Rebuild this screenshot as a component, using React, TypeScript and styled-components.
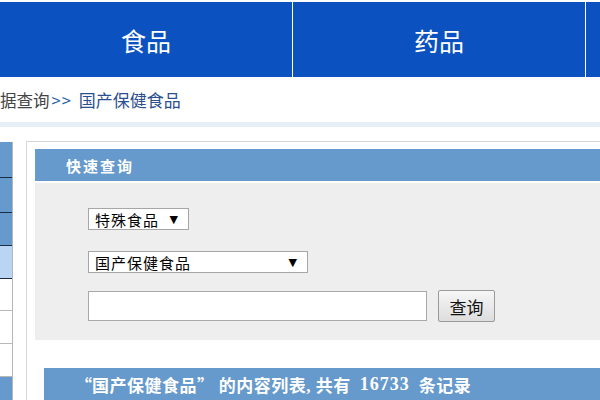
import React from "react";
import styled, { createGlobalStyle } from "styled-components";

const Global = createGlobalStyle`
  html, body { margin: 0; padding: 0; background: #fff; }
  body { width: 600px; height: 400px; overflow: hidden; font-family: "Noto Sans CJK SC", "Liberation Sans", sans-serif; }
`;

const Page = styled.div`
  width: 600px;
  height: 400px;
  overflow: hidden;
  padding-top: 2px;
  box-sizing: border-box;
`;

const Nav = styled.nav`
  display: flex;
  height: 75px;
  background: #0b52c0;
  gap: 1px;
`;

const NavItem = styled.div`
  flex: 0 0 292px;
  display: flex;
  align-items: center;
  justify-content: center;
  background: #0b52c0;
  color: #fff;
  font-size: 25px;
  box-shadow: 1px 0 0 #ffffff;
`;

const Crumb = styled.div`
  height: 45px;
  display: flex;
  align-items: center;
  font-size: 16.5px;
  color: #444;
  white-space: nowrap;
`;

const CrumbArrow = styled.span`
  color: #2a62a8;
  margin: 0 7px 0 2px;
  letter-spacing: 1px;
`;

const CrumbCurrent = styled.span`
  color: #2b4f8f;
  font-size: 17px;
`;

const Strip = styled.div`
  height: 5px;
  background: #e7eff7;
  margin-bottom: 14px;
`;

const Body = styled.div`
  display: flex;
  gap: 13px;
`;

const Sidebar = styled.div`
  flex: 0 0 12px;
  display: flex;
  flex-direction: column;
  border-right: 1px solid #b5b5b5;
  margin-top: 1px;
`;

const SideRow = styled.div<{ $tone: "blue" | "light" | "white"; $h: number }>`
  height: ${(p) => p.$h}px;
  background: ${(p) => (p.$tone === "blue" ? "#6699cc" : p.$tone === "light" ? "#b9d5f3" : "#ffffff")};
  border-bottom: 1px solid ${(p) => (p.$tone === "white" ? "#b8b8b8" : "#1c2c44")};
`;

const Main = styled.div`
  flex: 1;
  border-top: 1px solid #d6d6d6;
  border-left: 1px solid #d6d6d6;
  padding: 7px 0 0 8px;
`;

const BarTitle = styled.div`
  height: 32px;
  background: #6699cc;
  color: #fff;
  font-weight: bold;
  font-size: 15px;
  letter-spacing: 2px;
  display: flex;
  align-items: center;
  padding-left: 31px;
`;

const SearchArea = styled.div`
  margin-top: 2px;
  height: 157px;
  background: #eeeeee;
  padding: 25px 0 0 53px;
  box-sizing: border-box;
  display: flex;
  flex-direction: column;
  align-items: flex-start;
`;

const SelectBox = styled.div<{ $w: number }>`
  width: ${(p) => p.$w}px;
  height: 22px;
  box-sizing: border-box;
  border: 1px solid #a6a6a6;
  background: #fff;
  display: flex;
  align-items: center;
  justify-content: space-between;
  padding: 0 9px 0 6px;
  font-size: 15px;
  color: #000;
  letter-spacing: 1px;
`;

const Arrow = styled.span`
  font-size: 11px;
  font-family: "DejaVu Sans", sans-serif;
`;

const Spacer = styled.div<{ $h: number }>`
  height: ${(p) => p.$h}px;
`;

const InputRow = styled.div`
  display: flex;
  align-items: center;
  gap: 11px;
`;

const TextInput = styled.input`
  width: 339px;
  height: 30px;
  box-sizing: border-box;
  border: 1px solid #a9a9a9;
  background: #fff;
  outline: none;
  margin: 0;
`;

const Button = styled.button`
  width: 57px;
  height: 32px;
  box-sizing: border-box;
  border: 1px solid #9a9a9a;
  border-radius: 2px;
  background: linear-gradient(#f6f6f6, #dddddd);
  font-family: "Noto Sans CJK SC", sans-serif;
  font-size: 17px;
  color: #111;
  padding: 0;
  margin: 0;
`;

const ListBar = styled.div`
  margin: 28px 0 0 9px;
  height: 32px;
  background: #6699cc;
  color: #fff;
  font-weight: bold;
  font-size: 17px;
  letter-spacing: 0.5px;
  display: flex;
  align-items: center;
  padding-left: 31px;
  white-space: nowrap;
  font-family: "Liberation Serif", "Noto Sans CJK SC", serif;
`;

const Quote = styled.span`
  font-family: "Noto Sans CJK SC", sans-serif;
  display: inline-block;
  width: 17px;
  text-align: center;
`;

const Count = styled.span`
  margin: 0 9px;
  font-size: 18px;
  letter-spacing: 1px;
`;

const sideRows: { tone: "blue" | "light" | "white"; h: number }[] = [
  { tone: "blue", h: 35 },
  { tone: "blue", h: 34 },
  { tone: "blue", h: 32 },
  { tone: "light", h: 32 },
  { tone: "white", h: 31 },
  { tone: "white", h: 32 },
  { tone: "white", h: 32 },
  { tone: "blue", h: 40 },
];

export default function App() {
  return (
    <Page>
      <Global />
      <Nav>
        <NavItem>食品</NavItem>
        <NavItem>药品</NavItem>
        <NavItem>&nbsp;</NavItem>
      </Nav>
      <Crumb>
        据查询<CrumbArrow>&gt;&gt;</CrumbArrow>
        <CrumbCurrent>国产保健食品</CrumbCurrent>
      </Crumb>
      <Strip />
      <Body>
        <Sidebar>
          {sideRows.map((r, i) => (
            <SideRow key={i} $tone={r.tone} $h={r.h} />
          ))}
        </Sidebar>
        <Main>
          <BarTitle>快速查询</BarTitle>
          <SearchArea>
            <SelectBox $w={101}>
              特殊食品<Arrow>▼</Arrow>
            </SelectBox>
            <Spacer $h={21} />
            <SelectBox $w={220}>
              国产保健食品<Arrow>▼</Arrow>
            </SelectBox>
            <Spacer $h={17} />
            <InputRow>
              <TextInput />
              <Button>查询</Button>
            </InputRow>
          </SearchArea>
          <ListBar>
            <Quote>“</Quote>国产保健食品<Quote>”</Quote>&nbsp;的内容列表, 共有<Count>16733</Count>条记录
          </ListBar>
        </Main>
      </Body>
    </Page>
  );
}
